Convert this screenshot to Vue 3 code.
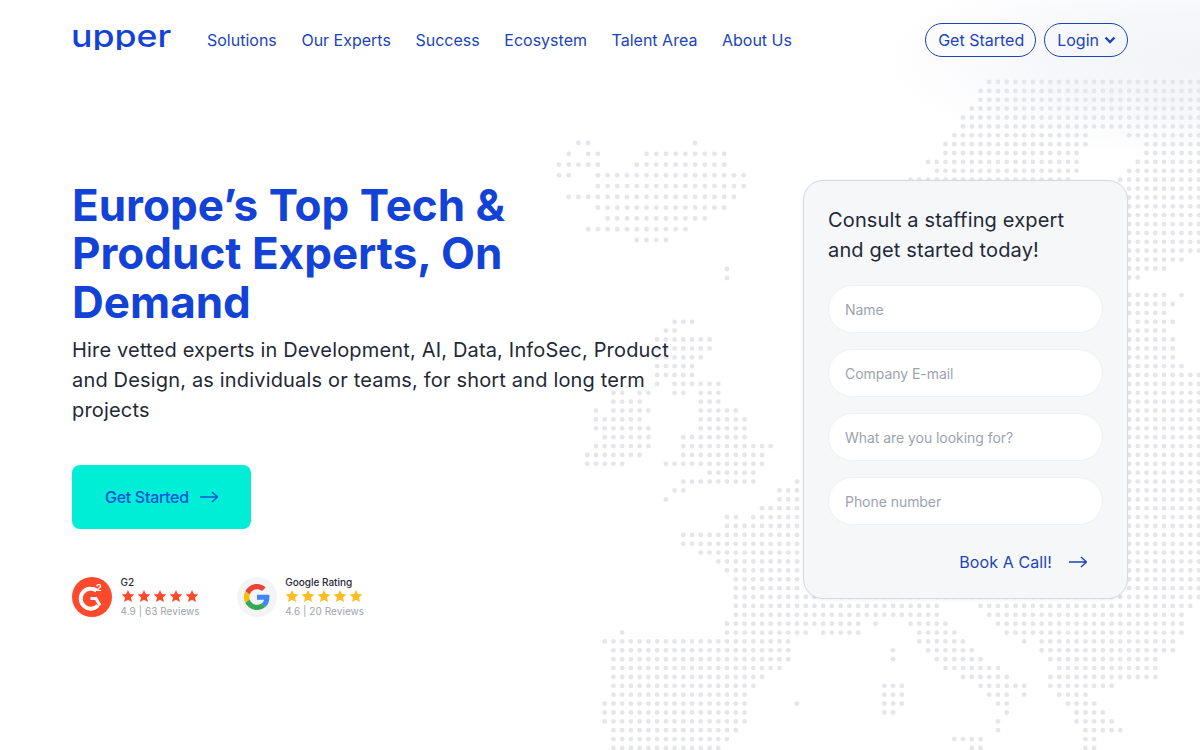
<template>
  <div class="page">
    <svg class="world-map" width="1200" height="750" viewBox="0 0 1200 750" aria-hidden="true">
      <circle v-for="(d, i) in dots" :key="i" :cx="d.x" :cy="d.y" :r="d.r" />
    </svg>

    <header class="top-bar">
      <div class="logo-slot"><span class="logo">upper</span></div>
      <nav class="nav-links">
        <a v-for="link in navLinks" :key="link" href="#">{{ link }}</a>
      </nav>
      <div class="top-actions">
        <a class="pill" href="#">Get Started</a>
        <a class="pill" href="#">
          Login
          <svg class="chevron" width="12" height="8" viewBox="0 0 12 8"><path d="M1.500 1.500 6 6l4.500-4.500" /></svg>
        </a>
      </div>
    </header>

    <main class="hero">
      <section class="hero-copy">
        <h1>Europe’s Top Tech &amp; Product Experts, On Demand</h1>
        <p class="lead">Hire vetted experts in Development, AI, Data, InfoSec, Product and Design, as individuals or teams, for short and long term projects</p>
        <a class="cta" href="#">
          Get Started
          <svg class="arrow" width="18" height="12" viewBox="0 0 18 12"><path d="M0 6h17.500M12 1l5.500 5-5.500 5" /></svg>
        </a>
        <div class="ratings">
          <div v-for="r in ratings" :key="r.name" class="rating">
            <svg v-if="r.name === 'G2'" class="badge" width="40" height="40" viewBox="0 0 40 40">
              <circle cx="20" cy="20" r="20" fill="#ff492c" />
              <path d="M24.500 13.500A10 10 0 1 0 26 28.500" fill="none" stroke="#fff" stroke-width="4" />
              <path d="M18.500 21.500h5.500l4 7" fill="none" stroke="#fff" stroke-width="3" />
              <text x="24" y="14" class="badge-two">2</text>
            </svg>
            <span v-else class="badge google">
              <svg width="26" height="26" viewBox="0 0 48 48">
                <path fill="#EA4335" d="M24 9.500c3.540 0 6.710 1.220 9.210 3.600l6.850-6.850C35.900 2.380 30.470 0 24 0 14.620 0 6.510 5.380 2.560 13.220l7.980 6.190C12.430 13.720 17.740 9.500 24 9.500z" />
                <path fill="#4285F4" d="M46.980 24.550c0-1.570-.15-3.090-.38-4.550H24v9.020h12.940c-.58 2.960-2.260 5.480-4.780 7.180l7.730 6c4.510-4.180 7.090-10.360 7.090-17.650z" />
                <path fill="#FBBC05" d="M10.530 28.590c-.48-1.450-.76-2.990-.76-4.590s.27-3.140.76-4.590l-7.980-6.190C.92 16.460 0 20.120 0 24c0 3.880.92 7.540 2.560 10.780l7.970-6.190z" />
                <path fill="#34A853" d="M24 48c6.480 0 11.930-2.130 15.890-5.810l-7.730-6c-2.150 1.450-4.920 2.300-8.160 2.300-6.260 0-11.570-4.220-13.470-9.910l-7.980 6.190C6.510 42.620 14.620 48 24 48z" />
              </svg>
            </span>
            <div class="rating-text">
              <span class="rating-name">{{ r.name }}</span>
              <span class="stars">
                <svg v-for="n in 5" :key="n" width="14" height="14" viewBox="0 0 24 24" :fill="r.color">
                  <path d="M12 1.500l3.200 7.100 7.700.8-5.800 5.200 1.700 7.600L12 18.300l-6.800 3.900 1.700-7.600L1.100 9.400l7.700-.8z" />
                </svg>
              </span>
              <span class="rating-score">{{ r.score }}</span>
            </div>
          </div>
        </div>
      </section>

      <form class="consult-card" @submit.prevent>
        <h2>Consult a staffing expert and get started today!</h2>
        <input v-for="f in fields" :key="f" type="text" :placeholder="f" />
        <a class="book-call" href="#">
          Book A Call!
          <svg class="arrow" width="18" height="12" viewBox="0 0 18 12"><path d="M0 6h17.500M12 1l5.500 5-5.500 5" /></svg>
        </a>
      </form>
    </main>
  </div>
</template>

<script setup>
const navLinks = ['Solutions', 'Our Experts', 'Success', 'Ecosystem', 'Talent Area', 'About Us']

const fields = ['Name', 'Company E-mail', 'What are you looking for?', 'Phone number']

const ratings = [
  { name: 'G2', score: '4.9 | 63 Reviews', color: '#ff492c' },
  { name: 'Google Rating', score: '4.6 | 20 Reviews', color: '#fbbc1e' },
]

// dot rows of the main map, one string per row: column ranges
const EDGE = '62-70'
const mapRows = [
  '46-70', '45-70', '45-70', '44-70', '43-70', '43-70',
  '42-57,62-70', '41-57,64-70', '41-56,64-70', '39-56,63-70', '40-56,62-70', '37-55,61-70',
  EDGE, EDGE, EDGE, EDGE, EDGE, EDGE, EDGE, EDGE,
  '62-68', '62-66', '62-63', '', '62-66,68', '62-67', '62-66',
  '10-12,63-67', '9-10,62-66', '8-14,62-67', '8-14,62-67', '8-13,62-67', '8-12,62-68',
  '8-12,62-70', '8,10-15,62-70', '3-4,6-7,10-11,13-15,62-70', '3-6,13-15,62-70',
  '1,3-7,13-17,62-70', '1-6,13-18,62-70', '1-7,13-18,62-70', '2-7,11-18,62-70',
  '1-7,11-21,62-70', '0-6,11-20,62-70', '0-4,9-20,62-70', '14-19,62-70',
  '11-19,24,62-70', '10-11,22-24,62-70', '9,22-24,62-70', '20-24,62-70',
  '16-17,19-24,62-70', '16-24,62-70', '11-24,62-70', '11-24,62-70', '13-24,62-70',
  '15-24,62-70', '16-24,62-70', '17-24,62-70', '17-24,62-70',
  '17-70', '17-40,45-69', '17-40,46-68',
  '16-31,33,37-41,47-68', '4,16-25,27-31,38-42,48-68', '2-23,38-43,50,52-67',
  '3-23,35,39-44,52-67', '3-23,35,40-45,53-65', '3-22,41-47,54-65', '3-20,43-48,53-65',
  '3-19,34-36,45-50,53-60', '3-18,34-36,46-48,50,54-57', '2-18,24,34-36,47-48,55-58',
  '2-18,34-35,48,56-59', '2-18,47,56-60', '3-17,47,57-61', '3-16,42-45,57-58', '3-15,44-45,57-58',
]

// the island top left sits on a slightly wider grid
const islandRows = [
  '2-3,14', '1,3-4,9-17', '0-4,8-17', '0-1,4-19', '4-19',
  '1-18', '4-17', '5-15', '3-13', '8-11',
]

const expand = (rows, x0, y0, stepX, stepY, r) => {
  const out = []
  rows.forEach((row, rowIdx) => {
    if (!row) return
    row.split(',').forEach((part) => {
      const [a, b] = part.split('-').map(Number)
      for (let c = a; c <= (b ?? a); c++) {
        out.push({ x: +(x0 + c * stepX).toFixed(1), y: +(y0 + rowIdx * stepY).toFixed(1), r })
      }
    })
  })
  return out
}

const dots = [
  ...expand(mapRows, 587.2, 82, 8.74, 8.88, 2.4),
  ...expand(islandRows, 559, 143, 9.72, 10.78, 2.4),
  { x: 727, y: 269, r: 2.4 },
  { x: 727, y: 278, r: 2.4 },
]
</script>

<style>
html, body {
  margin: 0;
  background: #fff;
}
</style>

<style scoped>
.page {
  position: relative;
  width: 1200px;
  height: 750px;
  overflow: hidden;
  background: radial-gradient(ellipse 320px 100px at 1200px 60px, #f3f4f8 0%, #f6f7fa 45%, #fff 100%);
  font-family: Inter, "Liberation Sans", sans-serif;
}

.world-map {
  position: absolute;
  top: 0;
  left: 0;
  fill: #e5e6ea;
}

.top-bar {
  position: relative;
  display: flex;
  align-items: center;
  height: 80px;
  padding: 0 72px;
}

.logo-slot {
  width: 135px;
  margin-top: -9px;
  line-height: 1;
}

.logo {
  display: block;
  width: 86px;
  margin-left: -1px;
  clip-path: inset(0 -20px 1px 0);
  color: #1342d6;
  font-size: 31px;
  font-weight: 500;
  line-height: 1;
  transform: scaleX(1.15);
  transform-origin: left center;
}

.nav-links {
  display: flex;
  gap: 24.600px;
}

.nav-links a,
.pill {
  color: #1c44b8;
  font-size: 16px;
  text-decoration: none;
}

.top-actions {
  display: flex;
  gap: 8px;
  margin-left: auto;
}

.pill {
  display: flex;
  align-items: center;
  gap: 5px;
  box-sizing: border-box;
  height: 34px;
  padding: 0 11px 0 12px;
  border: 1px solid #1c44b8;
  border-radius: 17px;
}

.chevron path {
  fill: none;
  stroke: #1c44b8;
  stroke-width: 2.400;
}

.hero {
  position: relative;
  display: flex;
  justify-content: space-between;
  align-items: flex-start;
  padding: 100px 72px 0;
}

.hero-copy {
  width: 600px;
  padding-top: 1px;
}

h1 {
  margin: 0 0 9px;
  color: #1342d6;
  font-size: 44px;
  font-weight: 700;
  line-height: 48.400px;
}

.lead {
  margin: 0 0 40px;
  color: #1f2937;
  font-size: 20px;
  letter-spacing: 0.17px;
  line-height: 30px;
}

.cta {
  display: inline-flex;
  align-items: center;
  gap: 11px;
  box-sizing: border-box;
  width: 179px;
  height: 64px;
  padding-left: 33px;
  border-radius: 8px;
  background: #00eed5;
  color: #0f55d8;
  font-size: 16px;
  font-weight: 500;
  letter-spacing: -0.3px;
  text-decoration: none;
}

.arrow path {
  fill: none;
  stroke: currentColor;
  stroke-width: 1.500;
}

.ratings {
  display: flex;
  gap: 37px;
  margin-top: 46px;
}

.rating {
  display: flex;
  align-items: center;
  gap: 8px;
}

.badge-two {
  fill: #fff;
  font-size: 9px;
  font-weight: 700;
}

.badge.google {
  display: flex;
  align-items: center;
  justify-content: center;
  width: 40px;
  height: 40px;
  border-radius: 50%;
  background: #f3f4f6;
}

.rating-text {
  display: flex;
  flex-direction: column;
  padding-left: 0.500px;
}

.rating-name {
  color: #1f2937;
  font-size: 10px;
  font-weight: 500;
  line-height: 14px;
}

.stars {
  display: flex;
  gap: 2px;
  height: 14px;
}

.rating-score {
  margin-top: 1px;
  color: #9ca3af;
  font-size: 10px;
  letter-spacing: 0.05px;
  line-height: 14px;
}

.consult-card {
  display: flex;
  flex-direction: column;
  gap: 16px;
  box-sizing: border-box;
  width: 325px;
  height: 419px;
  padding: 24px 24px 0;
  border: 1px solid #d6d8dd;
  border-radius: 20px;
  background: #f6f7f9;
  box-shadow: 0 1px 4px rgba(0, 0, 0, 0.05);
}

h2 {
  max-width: 260px;
  margin: 0 0 4px;
  color: #1f2937;
  font-size: 20px;
  font-weight: 400;
  letter-spacing: 0.15px;
  line-height: 30px;
}

input {
  box-sizing: border-box;
  flex: none;
  width: 275px;
  height: 48px;
  padding: 0 16px;
  border: 1px solid #eff0f3;
  border-radius: 24px;
  outline: none;
  background: #fff;
  font-family: inherit;
  font-size: 14px;
  letter-spacing: -0.05px;
}

input::placeholder {
  color: #9ca3af;
}

.book-call {
  display: flex;
  align-items: center;
  justify-content: flex-end;
  gap: 17px;
  margin-top: 11px;
  padding-right: 16px;
  color: #1c44b8;
  font-size: 16px;
  letter-spacing: 0.1px;
  text-decoration: none;
}
</style>
